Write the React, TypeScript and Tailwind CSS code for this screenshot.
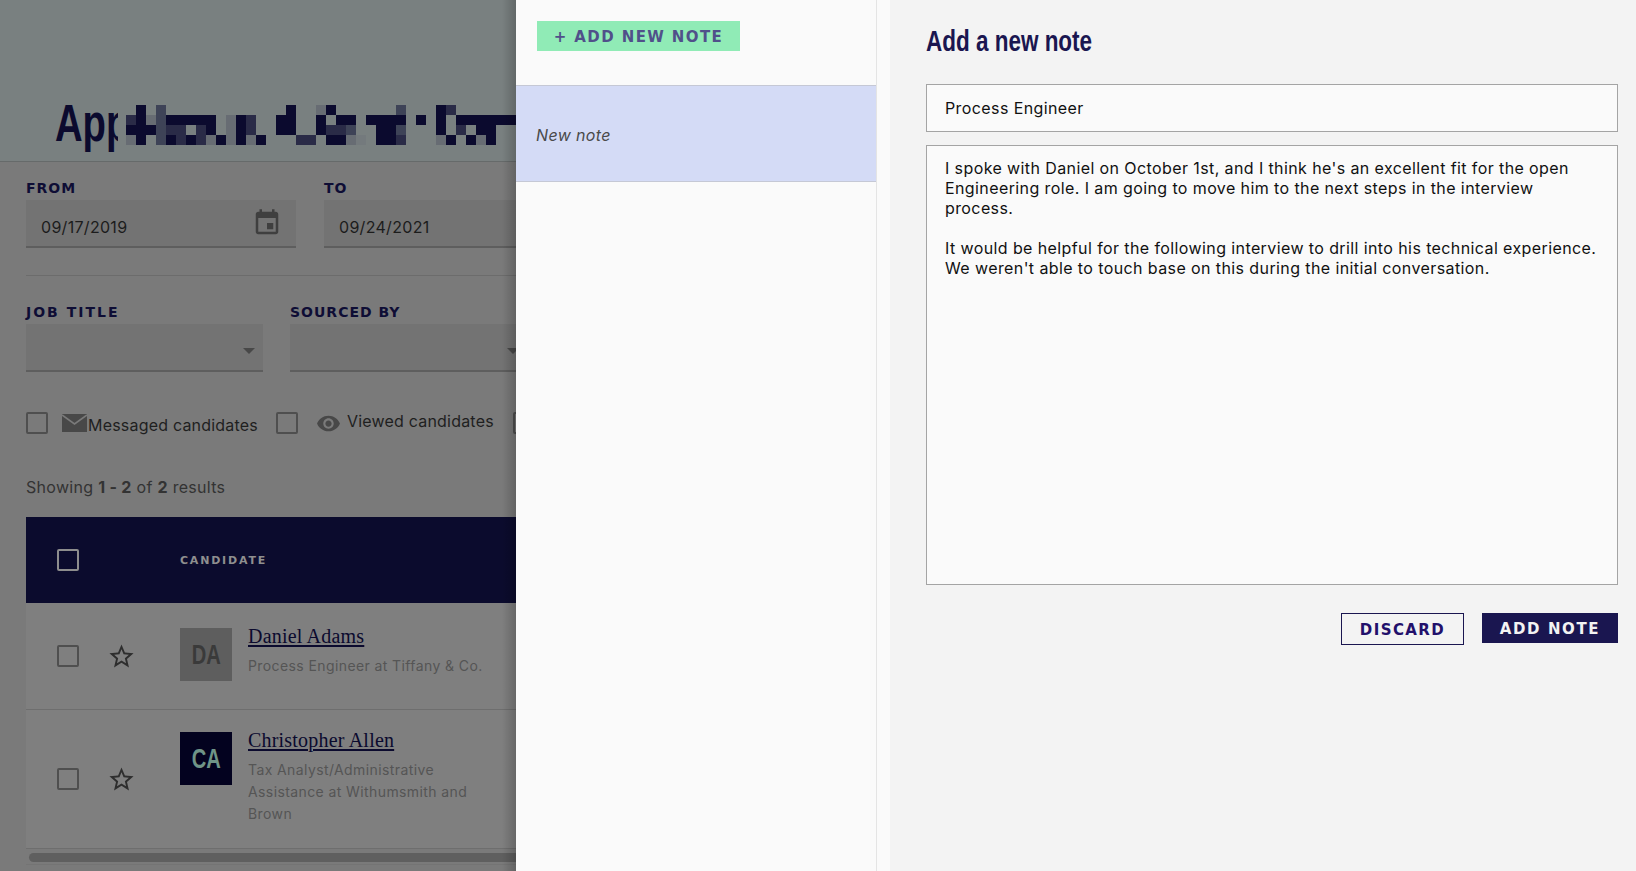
const BODY = "font-['Inter',sans-serif]";

const mosaicRows = [
  "..#.b............#..c#......b...#a......",
  ".a#cb#####.c#a..##..#.##.####.#.#.######",
  ".###baa.a#.c#a..##..#aab..##b...#.a.##..",
  ".c#.b#a#ac#c#c#...aa.##cd.##a...c#.#c#..",
];

const mosaicColors: Record<string, string> = {
  "#": "#0b0a2e",
  a: "#2a2b47",
  b: "#3e4357",
  c: "#676c73",
  d: "#747a7d",
};

function Mosaic() {
  return (
    <svg width="400" height="52" className="absolute left-[116px] top-[105px]">
      {/* blurred part of the title hides the rest of the word */}
      <rect x="2" y="0" width="24" height="52" fill="#798080" />
      {mosaicRows.map((row, y) =>
        row.split("").map((ch, x) =>
          ch === "." ? null : (
            <rect key={`${x}-${y}`} x={x * 10} y={y * 10} width="10" height="10" fill={mosaicColors[ch]} />
          )
        )
      )}
    </svg>
  );
}

function Label({ children }: { children: React.ReactNode }) {
  return (
    <p className="font-['DejaVu_Sans',sans-serif] font-bold text-[14px] leading-[14px] tracking-[1px] text-[#0e0d35]">
      {children}
    </p>
  );
}

function Box() {
  return <span className="block shrink-0 w-[22px] h-[22px] border-[2px] border-[#4f4f4f] rounded-[2px]" />;
}

function Star() {
  return (
    <svg viewBox="0 0 24 24" className="w-[29px] h-[29px] fill-[#2e2e2e]">
      <path d="M22 9.24l-7.19-.62L12 2 9.19 8.63 2 9.24l5.46 4.73L5.82 21 12 17.27 18.18 21l-1.63-7.03L22 9.24zM12 15.4l-3.76 2.27 1-4.28-3.32-2.88 4.38-.38L12 6.1l1.71 4.04 4.38.38-3.32 2.88 1 4.28L12 15.4z" />
    </svg>
  );
}

function Caret() {
  return <span className="w-0 h-0 border-x-[6px] border-x-transparent border-t-[6px] border-t-[#484848]" />;
}

function DateField({ value, icon }: { value: string; icon?: boolean }) {
  return (
    <div className="w-full h-[48px] bg-[#737373] border-b-[2px] border-[#5e5e5e] flex items-center justify-between pl-[15px] pr-[14px]">
      <span className="relative top-[4px] text-[16px] tracking-[0.3px] text-[#1c1c1c]">{value}</span>
      {icon && (
        <svg viewBox="0 0 24 24" className="w-[30px] h-[30px] fill-[#3f3f3f]">
          <path d="M17 12h-5v5h5v-5zM16 1v2H8V1H6v2H5c-1.11 0-1.99.9-1.99 2L3 19c0 1.1.89 2 2 2h14c1.1 0 2-.9 2-2V5c0-1.1-.9-2-2-2h-1V1h-2zm3 18H5V8h14v11z" />
        </svg>
      )}
    </div>
  );
}

function SelectField() {
  return (
    <div className="w-full h-[48px] bg-[#737373] border-b-[2px] border-[#5e5e5e] flex items-center justify-end pr-[8px] pt-[7px]">
      <Caret />
    </div>
  );
}

function Candidate({
  initials,
  name,
  lines,
  rowClass,
  cellClass,
  tileClass,
}: {
  initials: string;
  name: string;
  lines: string[];
  rowClass: string;
  cellClass: string;
  tileClass: string;
}) {
  return (
    <div className={`flex bg-[#7f7f7f] border-b border-[#6e6e6e] ${rowClass}`}>
      <div className="w-[154px] shrink-0 pl-[31px] flex items-center gap-[28px]">
        <Box />
        <Star />
      </div>
      <div className={`flex ${cellClass}`}>
        <div className={`w-[52px] h-[53px] shrink-0 flex items-center justify-center ${tileClass}`}>
          <span className="inline-block scale-x-[0.72] font-['Liberation_Sans',sans-serif] font-bold text-[28px] leading-[28px]">
            {initials}
          </span>
        </div>
        <div className="ml-[16px]">
          <a className="block font-['Liberation_Serif',serif] text-[20px] leading-[24px] tracking-[0.2px] -mt-[4px] underline underline-offset-2 text-[#0b0a2e]">
            {name}
          </a>
          <p className="mt-[7px] text-[14px] leading-[22px] tracking-[0.4px] text-[#555555] whitespace-pre-line">
            {lines.join("\n")}
          </p>
        </div>
      </div>
    </div>
  );
}

function Page() {
  return (
    <div className="relative w-[516px] shrink-0 h-full overflow-hidden bg-[#7a7a7a]">
      <header className="relative h-[162px] bg-[#798080] border-b border-[#666a6a] pl-[55px] pt-[95px]">
        <h1 className="inline-block origin-left scale-x-[0.75] font-['Liberation_Sans',sans-serif] font-bold text-[51px] leading-[58px] text-[#0b0a2e]">
          App
        </h1>
        <Mosaic />
      </header>

      <div className="pl-[26px] w-[1000px]">
        <div className="flex gap-[28px] pt-[19px]">
          <div className="w-[270px]">
            <Label>FROM</Label>
            <div className="mt-[5px]">
              <DateField value="09/17/2019" icon />
            </div>
          </div>
          <div className="w-[270px]">
            <Label>TO</Label>
            <div className="mt-[5px]">
              <DateField value="09/24/2021" />
            </div>
          </div>
        </div>

        <div className="mt-[27px] border-t border-[#6c6c6c]" />

        <div className="flex gap-[27px] mt-[29px]">
          <div className="w-[237px]">
            <Label>
              <span className="tracking-[2px]">JOB TITLE</span>
            </Label>
            <div className="mt-[5px]">
              <SelectField />
            </div>
          </div>
          <div className="w-[237px]">
            <Label>SOURCED BY</Label>
            <div className="mt-[5px]">
              <SelectField />
            </div>
          </div>
        </div>

        <div className="flex items-center mt-[40px] h-[22px] text-[16px] tracking-[0.2px] text-[#1f1f1f]">
          <Box />
          <svg viewBox="0 0 25 18" className="ml-[14px] w-[25px] h-[18px]">
            <rect width="25" height="18" fill="#484848" />
            <path d="M0 1 L12.5 10 L25 1" fill="none" stroke="#7a7a7a" strokeWidth="1.6" />
          </svg>
          <span className="ml-[1px] w-[170px] relative top-[2px] whitespace-nowrap">Messaged candidates</span>
          <span className="ml-[18px]">
            <Box />
          </span>
          <svg viewBox="0 0 24 24" className="ml-[18px] w-[25px] h-[25px] fill-[#484848]">
            <path d="M12 4.5C7 4.5 2.73 7.61 1 12c1.73 4.39 6 7.5 11 7.5s9.27-3.11 11-7.5c-1.73-4.39-6-7.5-11-7.5zM12 17c-2.76 0-5-2.24-5-5s2.24-5 5-5 5 2.24 5 5-2.24 5-5 5zm0-8c-1.66 0-3 1.34-3 3s1.34 3 3 3 3-1.34 3-3-1.34-3-3-3z" />
          </svg>
          <span className="ml-[6px] w-[148px] relative -top-[2px] whitespace-nowrap">Viewed candidates</span>
          <span className="ml-[18px]">
            <Box />
          </span>
        </div>

        <p className="mt-[41px] text-[16px] leading-[24px] tracking-[0.3px] text-[#333333]">
          Showing <b className="font-bold">1 - 2</b> of <b className="font-bold">2</b> results
        </p>

        <div className="mt-[18px]">
          <div className="h-[86px] bg-[#0b0b2d] flex items-center pl-[31px]">
            <span className="block shrink-0 w-[22px] h-[22px] border-[2px] border-[#8d8d8d] rounded-[2px]" />
            <span className="relative top-[1px] ml-[101px] font-['DejaVu_Sans',sans-serif] font-bold text-[11px] tracking-[1.8px] text-[#8f8f8f]">
              CANDIDATE
            </span>
          </div>
          <Candidate
            initials="DA"
            name="Daniel Adams"
            lines={["Process Engineer at Tiffany & Co."]}
            rowClass="h-[107px]"
            cellClass="pt-[25px]"
            tileClass="bg-[#5e5e5e] text-[#3a3a3a]"
          />
          <Candidate
            initials="CA"
            name="Christopher Allen"
            lines={["Tax Analyst/Administrative", "Assistance at Withumsmith and", "Brown"]}
            rowClass="h-[139px]"
            cellClass="pt-[22px]"
            tileClass="bg-[#03021f] text-[#6f9487]"
          />
          <div className="mt-[4px] h-[9px] ml-[3px] rounded-full bg-[#5f5f5f]" />
          <div className="mt-[2px] border-t border-[#747474]" />
        </div>
      </div>

      {/* panel's shadow on the dimmed page */}
      <div className="absolute top-0 bottom-0 right-0 w-[14px] bg-gradient-to-r from-transparent to-[#00000030]" />
    </div>
  );
}

function NotesList() {
  return (
    <aside className="w-[361px] shrink-0 h-full bg-[#fafafa] border-r border-[#e4e4e4]">
      <div className="h-[85px] pl-[21px] pt-[21px]">
        <button className="w-[203px] h-[30px] pt-[2px] bg-[#90ebb6] font-['DejaVu_Sans',sans-serif] font-bold text-[15px] tracking-[1.4px] text-[#50508a]">
          + ADD NEW NOTE
        </button>
      </div>
      <div className="h-[97px] bg-[#d4dbf6] border-y border-[#c5c8d5] flex items-center pl-[20px] pt-[3px]">
        <span className="italic text-[16px] tracking-[0.35px] text-[#4a4a4a]">New note</span>
      </div>
    </aside>
  );
}

function NoteForm() {
  return (
    <main className="flex-1 h-full border-l-[13px] border-[#fafafa] bg-[#f3f3f3] pl-[36px] pr-[18px]">
      <h2 className="pt-[24px] origin-left scale-x-[0.775] font-['Liberation_Sans',sans-serif] font-bold text-[29px] leading-[34px] text-[#1a1650]">
        Add a new note
      </h2>
      <div className="mt-[26px] h-[48px] bg-[#fafafa] border border-[#a4a4a4] flex items-center pl-[18px] text-[16px] tracking-[0.4px] text-[#111111]">
        Process Engineer
      </div>
      <div className="mt-[13px] h-[440px] bg-[#fafafa] border border-[#a4a4a4] pl-[18px] pt-[12px] text-[16px] leading-[20px] tracking-[0.4px] text-[#111111] whitespace-pre-line">
        {"I spoke with Daniel on October 1st, and I think he's an excellent fit for the open\nEngineering role. I am going to move him to the next steps in the interview\nprocess.\n\nIt would be helpful for the following interview to drill into his technical experience.\nWe weren't able to touch base on this during the initial conversation."}
      </div>
      <div className="mt-[28px] flex justify-end items-start gap-[18px]">
        <button className="w-[123px] h-[32px] pt-[2px] border border-[#1a1650] font-['DejaVu_Sans',sans-serif] font-bold text-[15px] tracking-[1.4px] text-[#22106b]">
          DISCARD
        </button>
        <button className="w-[136px] h-[30px] pt-[2px] bg-[#1a1650] font-['DejaVu_Sans',sans-serif] font-bold text-[15px] tracking-[1.6px] text-[#f3f3f3]">
          ADD NOTE
        </button>
      </div>
    </main>
  );
}

export default function App() {
  return (
    <div className={`flex w-full h-[871px] overflow-hidden ${BODY}`}>
      <Page />
      <NotesList />
      <NoteForm />
    </div>
  );
}
